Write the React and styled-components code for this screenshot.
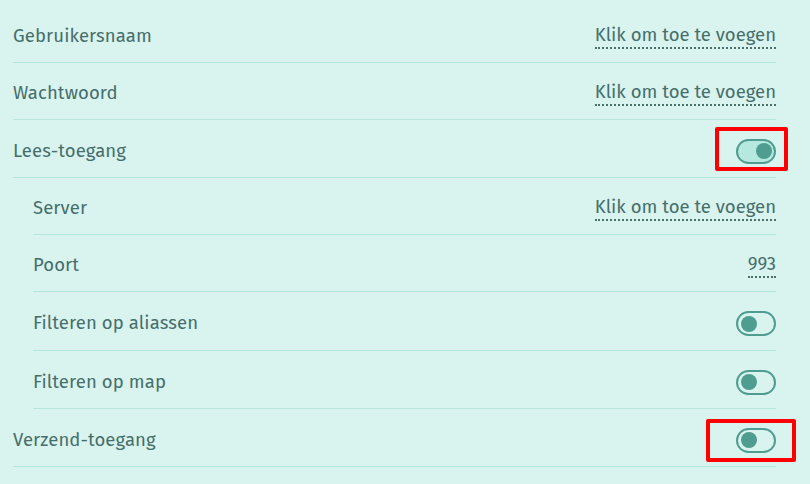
import React from "react";
import styled, { createGlobalStyle } from "styled-components";

const Global = createGlobalStyle`
  html, body { margin: 0; padding: 0; background: #d9f3ef; }
  body { font-family: "Fira Sans", "Open Sans", "Noto Sans", sans-serif; color: #466f6b; }
`;

const List = styled.div`
  display: flex;
  flex-direction: column;
  padding: 6px 34px 0 13px;
`;

const Row = styled.div`
  display: flex;
  align-items: center;
  justify-content: space-between;
  height: ${(p) => (p.$tall ? 58 : 57)}px;
  padding-top: 4px;
  margin-left: ${(p) => (p.$nested ? 20 : 0)}px;
  border-bottom: 1px solid #b2e8de;
  box-sizing: border-box;
  flex-shrink: 0;
`;

const Label = styled.span`
  font-size: 18.5px;
  font-weight: 400;
  letter-spacing: 0.1px;
`;

const Value = styled.span`
  font-size: 18.5px;
  font-weight: 400;
  padding-bottom: 1px;
  border-bottom: 2px dotted #4d6f69;
  line-height: 22px;
`;

const ToggleWrap = styled.span`
  position: relative;
  display: inline-flex;
  margin-top: 1px;
`;

const Track = styled.span`
  width: 40px;
  height: 25px;
  box-sizing: border-box;
  border: 2px solid #4f9d91;
  border-radius: 13px;
  background: ${(p) => (p.$on ? "#b6e8e0" : "transparent")};
  display: flex;
  align-items: center;
  justify-content: ${(p) => (p.$on ? "flex-end" : "flex-start")};
  padding: 0 2.5px;
`;

const Knob = styled.span`
  width: 16px;
  height: 16px;
  border-radius: 50%;
  background: #4f9d91;
`;

const Mark = styled.span`
  position: absolute;
  border: 4px solid #ff0000;
  border-radius: 2px;
  box-sizing: border-box;
  pointer-events: none;
`;

function Toggle({ on, mark }) {
  return (
    <ToggleWrap>
      <Track $on={on}>
        <Knob />
      </Track>
      {mark && <Mark style={mark} />}
    </ToggleWrap>
  );
}

export default function App() {
  return (
    <>
      <Global />
      <List>
        <Row>
          <Label>Gebruikersnaam</Label>
          <Value>Klik om toe te voegen</Value>
        </Row>
        <Row>
          <Label>Wachtwoord</Label>
          <Value>Klik om toe te voegen</Value>
        </Row>
        <Row $tall>
          <Label>Lees-toegang</Label>
          <Toggle on mark={{ left: -21, top: -12, width: 73, height: 44 }} />
        </Row>
        <Row $nested>
          <Label>Server</Label>
          <Value>Klik om toe te voegen</Value>
        </Row>
        <Row $nested>
          <Label>Poort</Label>
          <Value>993</Value>
        </Row>
        <Row $nested $tall style={{ height: 59 }}>
          <Label>Filteren op aliassen</Label>
          <Toggle />
        </Row>
        <Row $nested $tall>
          <Label>Filteren op map</Label>
          <Toggle />
        </Row>
        <Row $tall>
          <Label>Verzend-toegang</Label>
          <Toggle mark={{ left: -30, top: -9, width: 90, height: 43 }} />
        </Row>
      </List>
    </>
  );
}
